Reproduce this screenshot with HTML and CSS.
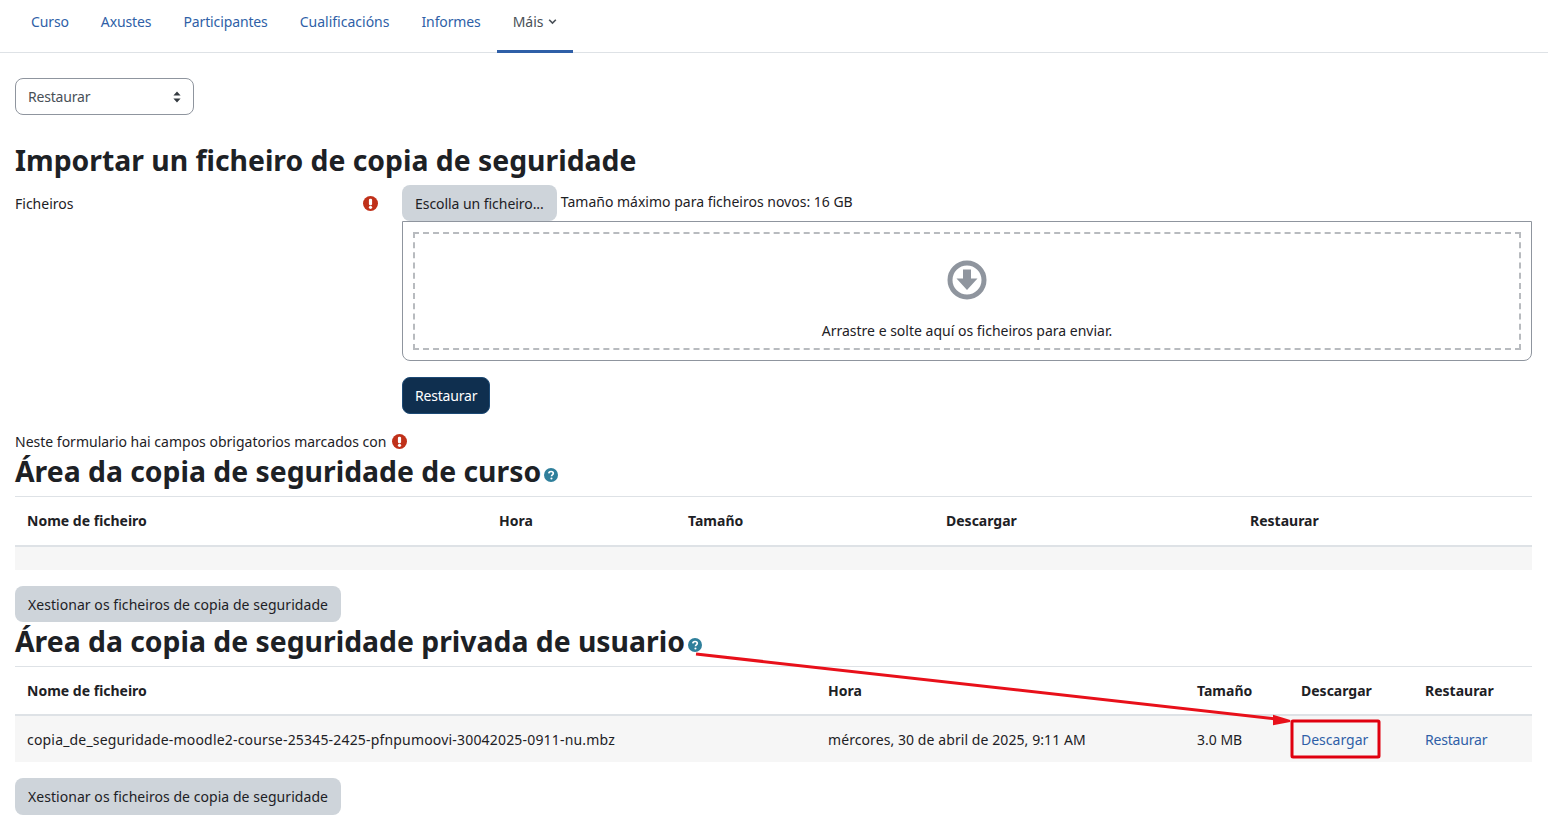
FILE: index.html
```html
<!DOCTYPE html>
<html lang="gl">
<head>
  <meta charset="UTF-8">
  <meta name="viewport" content="width=device-width, initial-scale=1.0">
  <title>Restaurar</title>
  <link rel="stylesheet" href="styles.css">
</head>
<body>
  <nav class="tabs">
    <a class="tab" href="#">Curso</a>
    <a class="tab" href="#">Axustes</a>
    <a class="tab" href="#">Participantes</a>
    <a class="tab tab-wide" href="#">Cualificacións</a>
    <a class="tab" href="#">Informes</a>
    <a class="tab tab-wide tab-active" href="#">Máis
      <svg class="caret" viewBox="0 0 10 8" width="9" height="7"><path d="M1.2 2 5 5.8 8.8 2" fill="none" stroke="currentColor" stroke-width="1.8"/></svg>
    </a>
  </nav>

  <main class="page">
    <div class="select-box">
      <span class="tight">Restaurar</span>
      <svg viewBox="0 0 8 12" width="8" height="12"><path d="M4 0.5 7.6 4.6H0.4ZM4 11.5 0.4 7.4H7.6Z" fill="#343a40"/></svg>
    </div>

    <h2 class="heading heading-first">Importar un ficheiro de copia de seguridade</h2>

    <div class="form-row">
      <div class="form-label">
        <span>Ficheiros</span>
        <svg class="req" viewBox="0 0 16 16" width="15" height="15"><circle cx="8" cy="8" r="8" fill="#c0311a"/><rect x="6.300" y="2.800" width="3.400" height="7" rx="1.400" fill="#fff"/><circle cx="8" cy="12.100" r="1.700" fill="#fff"/></svg>
      </div>
      <div class="form-field">
        <div class="picker-top">
          <button class="btn btn-grey btn-picker">Escolla un ficheiro...</button>
          <span class="max-size">Tamaño máximo para ficheiros novos: 16 GB</span>
        </div>
        <div class="dropzone">
          <div class="dropzone-inner">
            <svg viewBox="0 0 40 40" width="40" height="40">
              <circle cx="20" cy="20" r="17" fill="none" stroke="#8f959e" stroke-width="5"/>
              <path d="M16 9.5h8v9h6.5L20 30 9.500 18.500H16Z" fill="#8f959e"/>
            </svg>
            <span>Arrastre e solte aquí os ficheiros para enviar.</span>
          </div>
        </div>
        <button class="btn btn-primary tight">Restaurar</button>
      </div>
    </div>

    <p class="required-note">Neste formulario hai campos obrigatorios marcados con
      <svg class="req" viewBox="0 0 16 16" width="15" height="15"><circle cx="8" cy="8" r="8" fill="#c0311a"/><rect x="6.300" y="2.800" width="3.400" height="7" rx="1.400" fill="#fff"/><circle cx="8" cy="12.100" r="1.700" fill="#fff"/></svg>
    </p>

    <h2 class="heading">Área da copia de seguridade de curso<svg class="help" viewBox="0 0 16 16" width="14" height="14"><circle cx="8" cy="8" r="8" fill="#2f7f9b"/><path d="M5.500 6.200C5.600 4.700 6.700 4 8.100 4c1.400 0 2.500.8 2.500 2.100 0 1.800-2 1.800-2 3.200" fill="none" stroke="#fff" stroke-width="1.900"/><circle cx="8.500" cy="12" r="1.200" fill="#fff"/></svg></h2>
    <table class="files files-course">
      <colgroup><col class="c1"><col class="c2"><col class="c3"><col class="c4"><col class="c5"></colgroup>
      <thead>
        <tr><th>Nome de ficheiro</th><th>Hora</th><th>Tamaño</th><th>Descargar</th><th>Restaurar</th></tr>
      </thead>
      <tbody>
        <tr class="empty-row"><td colspan="5"></td></tr>
      </tbody>
    </table>
    <button class="btn btn-grey btn-manage">Xestionar os ficheiros de copia de seguridade</button>

    <h2 class="heading">Área da copia de seguridade privada de usuario<svg class="help" viewBox="0 0 16 16" width="14" height="14"><circle cx="8" cy="8" r="8" fill="#2f7f9b"/><path d="M5.500 6.200C5.600 4.700 6.700 4 8.100 4c1.400 0 2.500.8 2.500 2.100 0 1.800-2 1.800-2 3.200" fill="none" stroke="#fff" stroke-width="1.900"/><circle cx="8.500" cy="12" r="1.200" fill="#fff"/></svg></h2>
    <table class="files files-user">
      <colgroup><col class="c1"><col class="c2"><col class="c3"><col class="c4"><col class="c5"></colgroup>
      <thead>
        <tr><th>Nome de ficheiro</th><th>Hora</th><th>Tamaño</th><th>Descargar</th><th>Restaurar</th></tr>
      </thead>
      <tbody>
        <tr>
          <td class="cell-name">copia_de_seguridade-moodle2-course-25345-2425-pfnpumoovi-30042025-0911-nu.mbz</td>
          <td class="cell-date">mércores, 30 de abril de 2025, 9:11 AM</td>
          <td>3.0 MB</td>
          <td><a href="#">Descargar</a></td>
          <td><a class="tight" href="#">Restaurar</a></td>
        </tr>
      </tbody>
    </table>
    <button class="btn btn-grey btn-manage btn-last">Xestionar os ficheiros de copia de seguridade</button>
  </main>

  <!-- red annotation drawn on top of the screenshot -->
  <svg class="annotation" width="1548" height="825" viewBox="0 0 1548 825">
    <path d="M696 654 1276 719" fill="none" stroke="#e8101a" stroke-width="3"/>
    <path d="M1290 721 1274 716 1274 724Z" fill="#e8101a" stroke="#e8101a" stroke-width="2"/>
    <rect x="1292" y="721" width="87" height="36" rx="1" fill="none" stroke="#e0000f" stroke-width="3"/>
  </svg>
</body>
</html>
```

FILE: styles.css
```css
* {
  box-sizing: border-box;
}
body {
  margin: 0;
  background-color: #fff;
  color: #1d2125;
  font-family: "Noto Sans", "Open Sans", sans-serif;
  font-size: 14px;
  line-height: 21px;
  overflow: hidden;
}
a {
  color: #2f5fa7;
  text-decoration: none;
}
.tight {
  letter-spacing: -0.2px;
}
.tabs {
  display: flex;
  height: 53px;
  padding-left: 15px;
  border-bottom: 1px solid #dee2e6;
  letter-spacing: -0.12px;
}
.tab {
  display: flex;
  align-items: center;
  gap: 4px;
  height: 53px;
  padding: 0 16px 10px;
}
.tab-wide {
  letter-spacing: 0;
}
.tab-active {
  color: #495057;
  border-bottom: 3px solid #2f5fa7;
  padding-bottom: 7px;
}
.page {
  padding: 25px 16px 0 15px;
}
.select-box {
  display: flex;
  align-items: center;
  justify-content: space-between;
  width: 179px;
  height: 37px;
  padding: 0 12px;
  border: 1px solid #8f959e;
  border-radius: 8px;
  color: #495057;
}
.heading {
  display: flex;
  align-items: flex-end;
  margin: 1px 0 0;
  font-size: 28.35px;
  line-height: 36px;
  font-weight: 700;
}
.heading-first {
  margin-top: 27px;
  margin-bottom: 7px;
}
.help {
  margin: 0 0 7px 3px;
}
.form-row {
  display: grid;
  grid-template-columns: 387px 1fr;
}
.form-label {
  display: flex;
  justify-content: space-between;
  align-items: center;
  height: 36px;
  padding-right: 24px;
}
.picker-top {
  display: flex;
  align-items: flex-start;
  height: 36px;
}
.max-size {
  margin-left: 4px;
  line-height: 33px;
}
.btn {
  display: block;
  height: 37px;
  padding: 0 12px;
  border: 1px solid transparent;
  border-radius: 8px;
  font: inherit;
}
.btn-grey {
  background-color: #ced4da;
  color: #1d2125;
}
.btn-picker {
  height: 36px;
  letter-spacing: -0.05px;
}
.btn-manage {
  height: 36px;
  padding-top: 2px;
  letter-spacing: 0.05px;
}
.btn-last {
  height: 37px;
  padding-top: 0;
}
.btn-primary {
  margin-top: 16px;
  background-color: #0f2f4f;
  border-color: #1d4a75;
  color: #fff;
}
.dropzone {
  height: 140px;
  padding: 10px;
  border: 1px solid #8f959e;
  border-radius: 0 0 8px 8px;
}
.dropzone-inner {
  display: flex;
  flex-direction: column;
  align-items: center;
  height: 118px;
  padding-top: 26px;
  border: 2px dashed #b8bbbf;
}
.dropzone-inner span {
  margin-top: 20px;
}
.required-note {
  display: flex;
  align-items: center;
  gap: 6px;
  height: 21px;
  margin: 17px 0 0;
}
.files {
  width: 1517px;
  margin-top: 7px;
  border-collapse: collapse;
  table-layout: fixed;
  border-top: 1px solid #dee2e6;
}
.files th {
  height: 49px;
  padding: 0 12px;
  text-align: left;
  font-weight: 700;
  border-bottom: 2px solid #dee2e6;
}
.files td {
  height: 47px;
  padding: 0 12px;
  background-color: #f6f6f6;
}
.files .cell-name {
  letter-spacing: 0.18px;
}
.files .cell-date {
  letter-spacing: 0.08px;
}
.files .empty-row td {
  height: 24px;
}
.files + .btn {
  margin-top: 16px;
}
.files-course .c1 { width: 472px; }
.files-course .c2 { width: 189px; }
.files-course .c3 { width: 258px; }
.files-course .c4 { width: 304px; }
.files-course .c5 { width: 294px; }
.files-user .c1 { width: 801px; }
.files-user .c2 { width: 369px; }
.files-user .c3 { width: 104px; }
.files-user .c4 { width: 124px; }
.files-user .c5 { width: 119px; }
.annotation {
  position: absolute;
  top: 0;
  left: 0;
  pointer-events: none;
}
```
